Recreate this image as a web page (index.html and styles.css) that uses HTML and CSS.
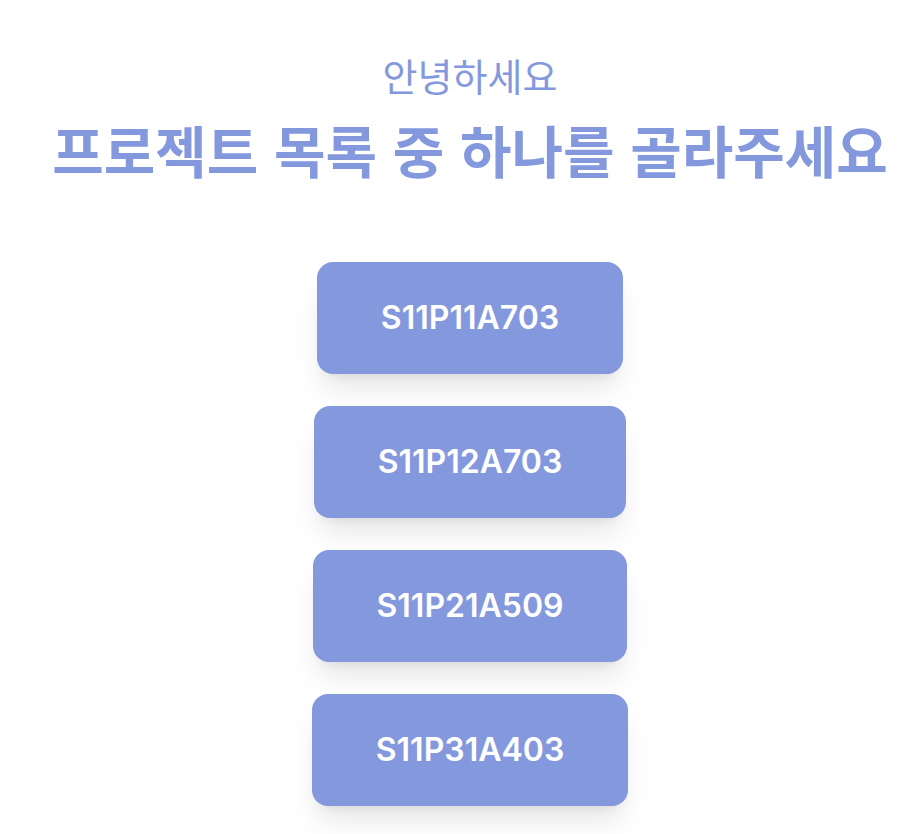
FILE: index.html
```html
<!DOCTYPE html>
<html lang="ko">
<head>
<meta charset="utf-8">
<meta name="viewport" content="width=device-width, initial-scale=1">
<title>프로젝트 목록</title>
<link rel="stylesheet" href="styles.css">
</head>
<body>
<main class="page">
  <header class="intro">
    <p class="greeting">안녕하세요</p>
    <h1 class="title">프로젝트 목록 중 하나를 골라주세요</h1>
  </header>
  <div class="projects">
    <button class="project" type="button">S11P11A703</button>
    <button class="project" type="button">S11P12A703</button>
    <button class="project" type="button">S11P21A509</button>
    <button class="project" type="button">S11P31A403</button>
  </div>
</main>
</body>
</html>
```
FILE: styles.css
```css
* { box-sizing: border-box; }
body {
  margin: 0;
  background: #fff;
  font-family: "Noto Sans CJK KR", sans-serif;
}
.page {
  display: flex;
  flex-direction: column;
  align-items: center;
  gap: 68px;
  padding: 52px 0 28px 20px;
}
.intro {
  color: #8498de;
  text-align: center;
  white-space: nowrap;
}
.greeting {
  margin: 0;
  font-size: 38px;
  line-height: 46px;
}
.title {
  margin: 6px 0 0;
  font-size: 56px;
  font-weight: 700;
  line-height: 90px;
}
.projects {
  display: flex;
  flex-direction: column;
  align-items: center;
  gap: 32px;
}
.project {
  height: 112px;
  padding: 0 64px;
  border: 0;
  border-radius: 16px;
  background: #8498de;
  box-shadow: 0 20px 30px -6px rgb(0 0 0 / 10%), 0 8px 12px -8px rgb(0 0 0 / 10%);
  color: #fff;
  font: 600 32px/48px Inter, sans-serif;
  cursor: pointer;
}
```
